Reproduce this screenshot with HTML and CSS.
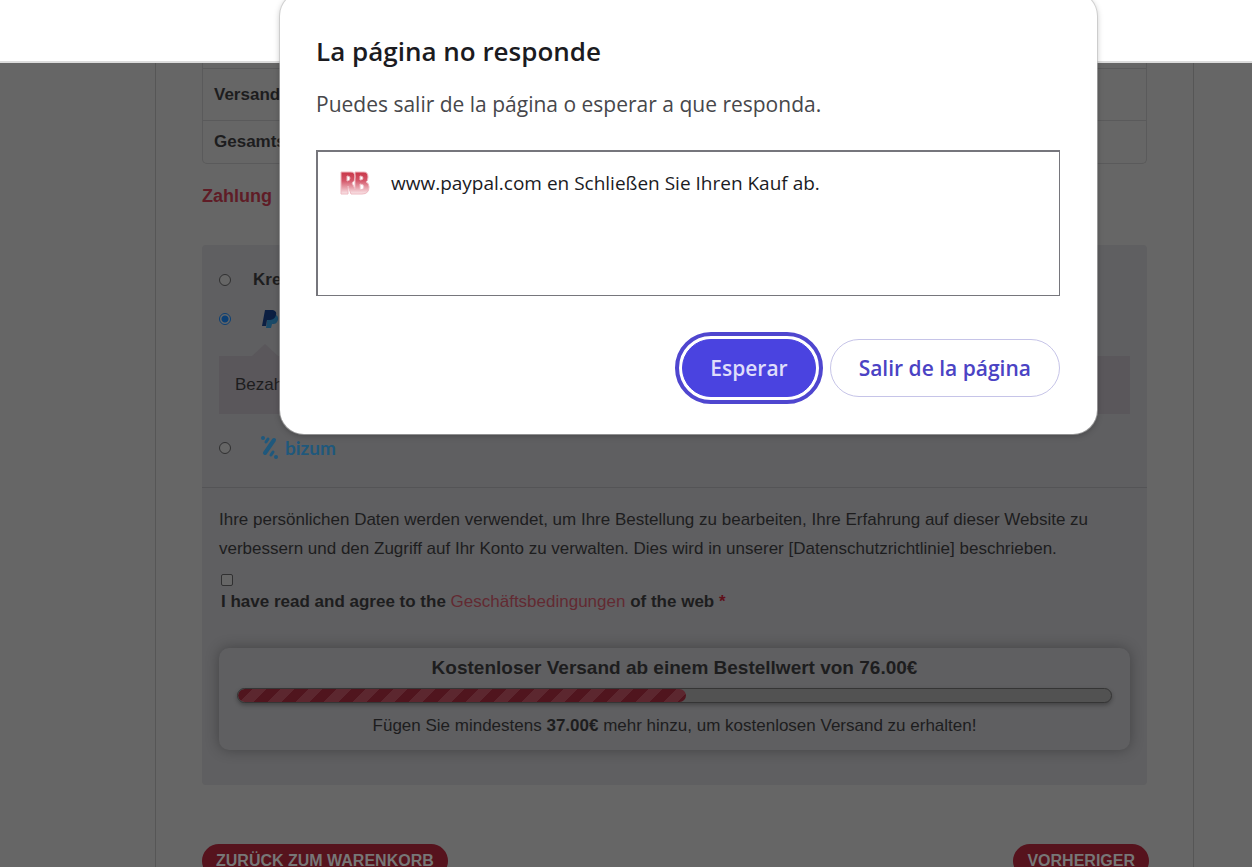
FILE: index.html
```html
<!DOCTYPE html>
<html lang="de">
<head>
    <meta charset="UTF-8">
    <meta name="viewport" content="width=device-width, initial-scale=1.0">
    <title>Schließen Sie Ihren Kauf ab</title>
    <link rel="stylesheet" href="styles.css">
</head>
<body>
    <header class="topbar"></header>

    <main class="page">
        <div class="content">
            <table class="totals">
                <tbody>
                    <tr class="cut"><td></td></tr>
                    <tr class="shipping"><th scope="row">Versand</th></tr>
                    <tr class="total"><th scope="row">Gesamtsumme</th></tr>
                </tbody>
            </table>

            <h3 class="section-title">Zahlung</h3>

            <form class="payment">
                <div class="methods">
                    <div class="method">
                        <input type="radio" name="payment" id="card">
                        <label for="card">Kreditkarte</label>
                    </div>
                    <div class="method">
                        <input type="radio" name="payment" id="paypal" checked>
                        <label for="paypal" class="logo" aria-label="PayPal">
                            <svg width="18" height="18" viewBox="0 0 18 18">
                                <path d="M7 5h8c2 1 3 4 1 7-1 2-3 2-5 2l-1 4H5z" fill="#1a4a68"/>
                                <path d="M4 0h6c4 0 6 2 5 5-1 4-4 5-7 5H6l-1 6H1z" fill="#0c1f42"/>
                            </svg>
                        </label>
                    </div>
                    <div class="payment-box">Bezahlen</div>
                    <div class="method">
                        <input type="radio" name="payment" id="bizum">
                        <label for="bizum" class="logo bizum">
                            <svg width="18" height="23" viewBox="0 0 18 23">
                                <g fill="none" stroke="#1f587c" stroke-linecap="round">
                                    <path d="M13 4L4 17" stroke-width="4"/>
                                    <path d="M7 3L5 6M12 16l-2 3" stroke-width="3"/>
                                </g>
                                <circle cx="2" cy="2" r="2" fill="#1f587c"/>
                                <circle cx="15" cy="21" r="2" fill="#1f587c"/>
                            </svg>
                            <span>bizum</span>
                        </label>
                    </div>
                </div>

                <div class="place-order">
                    <p class="privacy">Ihre persönlichen Daten werden verwendet, um Ihre Bestellung zu bearbeiten, Ihre Erfahrung auf dieser Website zu verbessern und den Zugriff auf Ihr Konto zu verwalten. Dies wird in unserer [Datenschutzrichtlinie] beschrieben.</p>
                    <div class="terms">
                        <input type="checkbox" id="terms">
                        <label for="terms">I have read and agree to the <a href="#">Geschäftsbedingungen</a> of the web <span class="required">*</span></label>
                    </div>

                    <div class="free-shipping">
                        <h4>Kostenloser Versand ab einem Bestellwert von 76.00€</h4>
                        <div class="bar"><div class="bar-fill" style="width: 51.3%"></div></div>
                        <p>Fügen Sie mindestens <strong>37.00€</strong> mehr hinzu, um kostenlosen Versand zu erhalten!</p>
                    </div>
                </div>
            </form>

            <div class="nav-buttons">
                <button type="button">ZURÜCK ZUM WARENKORB</button>
                <button type="button">VORHERIGER</button>
            </div>
        </div>
    </main>

    <div class="dialog" role="dialog" aria-labelledby="dialogTitle" lang="es">
        <h2 id="dialogTitle">La página no responde</h2>
        <p>Puedes salir de la página o esperar a que responda.</p>
        <div class="page-list">
            <svg class="favicon" width="30" height="26" viewBox="0 0 30 26">
                <defs>
                    <linearGradient id="fade" x1="0" y1="0" x2="0" y2="1">
                        <stop offset="0" stop-color="#c93547"/>
                        <stop offset="0.4" stop-color="#d4586a"/>
                        <stop offset="1" stop-color="#fae6e9"/>
                    </linearGradient>
                </defs>
                <path fill="url(#fade)" stroke="#eeb9c1" stroke-width="1" fill-rule="evenodd" d="M1 2h10q4 0 4 5 0 4-3 6l3 6V2h9q4 0 4 5 0 4-2 5 3 1 3 5 0 7-7 7H11l-3-8v8H1zM7 6v5q3 0 3-3 0-2-3-2zM20 6v4q3 0 3-2 0-2-3-2zM20 14v6q4 0 4-3t-4-3z"/>
            </svg>
            <span>www.paypal.com en Schließen Sie Ihren Kauf ab.</span>
        </div>
        <div class="dialog-buttons">
            <button type="button" class="wait">Esperar</button>
            <button type="button" class="leave">Salir de la página</button>
        </div>
    </div>
</body>
</html>
```
FILE: styles.css
```css
* {
    box-sizing: border-box;
}

body {
    margin: 0;
    height: 100vh;
    overflow: hidden;
    display: flex;
    flex-direction: column;
    background-color: #666;
    font-family: "Liberation Sans", Arial, sans-serif;
    font-size: 17px;
    color: #1d1d1e;
}

h2, h3, h4, p {
    margin: 0;
}

button {
    font-family: inherit;
    cursor: pointer;
}

.topbar {
    flex: 0 0 63px;
    background: #fff;
    border-bottom: 2px solid #dcdcdc;
}

.page {
    flex: 1;
    min-height: 0;
    padding: 0 58px 0 155px;
}

.content {
    min-height: 100%;
    padding: 0 46px;
    border-left: 1px solid #565656;
    border-right: 1px solid #565656;
}

/* Order totals */
.totals {
    width: 100%;
    border: 1px solid #5a5a5b;
    border-top: none;
    border-radius: 0 0 5px 5px;
    border-spacing: 0;
}

.totals th {
    padding: 0 11px;
    text-align: left;
    border-top: 1px solid #5a5a5b;
}

.cut td {
    height: 5px;
    padding: 0;
}

.shipping th {
    height: 52px;
}

.total th {
    height: 43px;
}

.section-title {
    margin: 20px 0 37px;
    font-size: 18px;
    line-height: 24px;
    color: #5f1c26;
}

/* Payment */
.payment {
    background: #5f5f61;
    border-radius: 4px;
}

.methods {
    padding: 15px 17px 20px;
    border-bottom: 1px solid #545456;
}

.method {
    display: flex;
    align-items: center;
    gap: 22px;
    height: 39px;
    font-weight: bold;
}

.method input,
.terms input {
    appearance: none;
    width: 12px;
    height: 12px;
    margin: 0;
    border: 1px solid #303031;
    background: #666;
}

.method input {
    border-radius: 50%;
}

.method input:checked {
    border-color: #0b3f74;
    background: radial-gradient(circle, #0b3f74 0 3px, #666 4px);
}

.logo {
    display: flex;
    align-items: center;
    gap: 6px;
    padding-left: 8px;
}

.bizum {
    font-family: Lato, sans-serif;
    font-size: 19px;
    line-height: 24px;
    color: #1f587c;
}

.payment-box {
    position: relative;
    padding: 0 16px;
    line-height: 58px;
    margin: 18px 0 14px;
    background: #5a575b;
}

.payment-box::before {
    content: "";
    position: absolute;
    top: -12px;
    left: 33px;
    border: 13px solid transparent;
    border-top: none;
    border-bottom: 12px solid #5a575b;
}

.place-order {
    padding: 17px 17px 35px;
}

.privacy {
    line-height: 29px;
}

.terms {
    padding: 11px 2px 0;
    line-height: 20px;
    font-weight: bold;
}

.terms input {
    display: block;
    border-radius: 2px;
}

.terms label {
    display: block;
    margin-top: 6px;
}

.terms a {
    color: #622a32;
    font-weight: normal;
    text-decoration: none;
}

.required {
    color: #5f101a;
}

/* Free shipping notice */
.free-shipping {
    margin-top: 36px;
    padding: 8px 18px 12px;
    border-radius: 10px;
    background: #5f5f61;
    box-shadow: 0 0 14px rgba(0, 0, 0, 0.3);
    text-align: center;
}

.free-shipping h4 {
    font-size: 19px;
    line-height: 24px;
}

.bar {
    height: 15px;
    margin: 8px 0 11px;
    border: 1px solid #353535;
    border-radius: 8px;
    background: #525252;
    box-shadow: 0 2px 4px rgba(0, 0, 0, 0.3);
    overflow: hidden;
}

.bar-fill {
    height: 100%;
    border-radius: 8px;
    background: repeating-linear-gradient(135deg, #50151e 0 10px, #5c272f 10px 20px);
}

.free-shipping p {
    line-height: 24px;
}

.nav-buttons {
    display: flex;
    justify-content: space-between;
    margin: 59px -2px 0 0;
}

.nav-buttons button {
    height: 34px;
    padding: 0 14px;
    border: none;
    border-radius: 17px;
    background: #56131d;
    color: #777;
    font-size: 16px;
    font-weight: bold;
}

/* Browser dialog */
.dialog {
    position: absolute;
    top: -8px;
    left: 280px;
    right: 155px;
    padding: 39px 37px 37px 36px;
    background: #fff;
    border-radius: 24px;
    box-shadow: 0 0 0 1px rgba(190, 190, 190, 0.6), 0 2px 6px rgba(0, 0, 0, 0.25);
    font-family: "Open Sans", "Segoe UI", sans-serif;
    color: #1b1b1f;
}

.dialog h2 {
    font-size: 26px;
    font-weight: 600;
    line-height: 40px;
}

.dialog p {
    margin: 17px 0 30px;
    font-size: 21px;
    line-height: 32px;
    color: #47474b;
}

.page-list {
    display: flex;
    align-items: flex-start;
    gap: 21px;
    height: 146px;
    padding: 18px 22px;
    border: 1px solid #76767c;
    border-top-width: 2px;
    border-left-width: 2px;
    font-size: 19px;
    line-height: 26px;
}

.dialog-buttons {
    display: flex;
    justify-content: flex-end;
    gap: 14px;
    margin-top: 43px;
}

.dialog-buttons button {
    height: 58px;
    padding: 0 28px;
    border: 1px solid #c6c4e8;
    border-radius: 29px;
    background: #fff;
    color: #4b43c4;
    font-size: 21px;
    font-weight: 600;
}

.dialog-buttons .wait {
    padding: 0 27px;
    border-color: #4a43e0;
    background: #4a43e0;
    color: #dfddfa;
    outline: 4px solid #4f46cf;
    outline-offset: 3px;
}
```
